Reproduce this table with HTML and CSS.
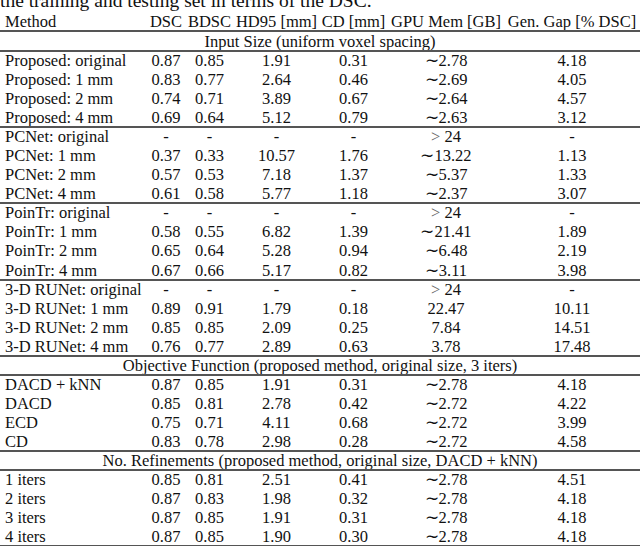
FILE: index.html
```html
<!DOCTYPE html>
<html lang="en">
<head>
<meta charset="utf-8">
<title>Table</title>
<link rel="stylesheet" href="styles.css">
</head>
<body>
<div class="caption">the training and testing set in terms of the DSC.</div>
<div class="table">
  <div class="row head">
    <div class="cell name">Method</div><div class="cell">DSC</div><div class="cell">BDSC</div><div class="cell">HD95 [mm]</div><div class="cell">CD [mm]</div><div class="cell">GPU Mem [GB]</div><div class="cell">Gen. Gap [% DSC]</div>
  </div>
  <div class="row head rule"><div class="cell span">Input Size (uniform voxel spacing)</div></div>

  <div class="row rule"><div class="cell name">Proposed: original</div><div class="cell">0.87</div><div class="cell">0.85</div><div class="cell">1.91</div><div class="cell">0.31</div><div class="cell">∼2.78</div><div class="cell">4.18</div></div>
  <div class="row"><div class="cell name">Proposed: 1 mm</div><div class="cell">0.83</div><div class="cell">0.77</div><div class="cell">2.64</div><div class="cell">0.46</div><div class="cell">∼2.69</div><div class="cell">4.05</div></div>
  <div class="row"><div class="cell name">Proposed: 2 mm</div><div class="cell">0.74</div><div class="cell">0.71</div><div class="cell">3.89</div><div class="cell">0.67</div><div class="cell">∼2.64</div><div class="cell">4.57</div></div>
  <div class="row"><div class="cell name">Proposed: 4 mm</div><div class="cell">0.69</div><div class="cell">0.64</div><div class="cell">5.12</div><div class="cell">0.79</div><div class="cell">∼2.63</div><div class="cell">3.12</div></div>

  <div class="row rule"><div class="cell name">PCNet: original</div><div class="cell">-</div><div class="cell">-</div><div class="cell">-</div><div class="cell">-</div><div class="cell"><span class="gt">&gt;</span>&nbsp;24</div><div class="cell">-</div></div>
  <div class="row"><div class="cell name">PCNet: 1 mm</div><div class="cell">0.37</div><div class="cell">0.33</div><div class="cell">10.57</div><div class="cell">1.76</div><div class="cell">∼13.22</div><div class="cell">1.13</div></div>
  <div class="row"><div class="cell name">PCNet: 2 mm</div><div class="cell">0.57</div><div class="cell">0.53</div><div class="cell">7.18</div><div class="cell">1.37</div><div class="cell">∼5.37</div><div class="cell">1.33</div></div>
  <div class="row"><div class="cell name">PCNet: 4 mm</div><div class="cell">0.61</div><div class="cell">0.58</div><div class="cell">5.77</div><div class="cell">1.18</div><div class="cell">∼2.37</div><div class="cell">3.07</div></div>

  <div class="row rule"><div class="cell name">PoinTr: original</div><div class="cell">-</div><div class="cell">-</div><div class="cell">-</div><div class="cell">-</div><div class="cell"><span class="gt">&gt;</span>&nbsp;24</div><div class="cell">-</div></div>
  <div class="row"><div class="cell name">PoinTr: 1 mm</div><div class="cell">0.58</div><div class="cell">0.55</div><div class="cell">6.82</div><div class="cell">1.39</div><div class="cell">∼21.41</div><div class="cell">1.89</div></div>
  <div class="row"><div class="cell name">PoinTr: 2 mm</div><div class="cell">0.65</div><div class="cell">0.64</div><div class="cell">5.28</div><div class="cell">0.94</div><div class="cell">∼6.48</div><div class="cell">2.19</div></div>
  <div class="row"><div class="cell name">PoinTr: 4 mm</div><div class="cell">0.67</div><div class="cell">0.66</div><div class="cell">5.17</div><div class="cell">0.82</div><div class="cell">∼3.11</div><div class="cell">3.98</div></div>

  <div class="row rule"><div class="cell name">3-D RUNet: original</div><div class="cell">-</div><div class="cell">-</div><div class="cell">-</div><div class="cell">-</div><div class="cell"><span class="gt">&gt;</span>&nbsp;24</div><div class="cell">-</div></div>
  <div class="row"><div class="cell name">3-D RUNet: 1 mm</div><div class="cell">0.89</div><div class="cell">0.91</div><div class="cell">1.79</div><div class="cell">0.18</div><div class="cell">22.47</div><div class="cell">10.11</div></div>
  <div class="row"><div class="cell name">3-D RUNet: 2 mm</div><div class="cell">0.85</div><div class="cell">0.85</div><div class="cell">2.09</div><div class="cell">0.25</div><div class="cell">7.84</div><div class="cell">14.51</div></div>
  <div class="row"><div class="cell name">3-D RUNet: 4 mm</div><div class="cell">0.76</div><div class="cell">0.77</div><div class="cell">2.89</div><div class="cell">0.63</div><div class="cell">3.78</div><div class="cell">17.48</div></div>

  <div class="row rule"><div class="cell span">Objective Function (proposed method, original size, 3 iters)</div></div>
  <div class="row rule"><div class="cell name">DACD + kNN</div><div class="cell">0.87</div><div class="cell">0.85</div><div class="cell">1.91</div><div class="cell">0.31</div><div class="cell">∼2.78</div><div class="cell">4.18</div></div>
  <div class="row"><div class="cell name">DACD</div><div class="cell">0.85</div><div class="cell">0.81</div><div class="cell">2.78</div><div class="cell">0.42</div><div class="cell">∼2.72</div><div class="cell">4.22</div></div>
  <div class="row"><div class="cell name">ECD</div><div class="cell">0.75</div><div class="cell">0.71</div><div class="cell">4.11</div><div class="cell">0.68</div><div class="cell">∼2.72</div><div class="cell">3.99</div></div>
  <div class="row"><div class="cell name">CD</div><div class="cell">0.83</div><div class="cell">0.78</div><div class="cell">2.98</div><div class="cell">0.28</div><div class="cell">∼2.72</div><div class="cell">4.58</div></div>

  <div class="row rule"><div class="cell span">No. Refinements (proposed method, original size, DACD + kNN)</div></div>
  <div class="row rule"><div class="cell name">1 iters</div><div class="cell">0.85</div><div class="cell">0.81</div><div class="cell">2.51</div><div class="cell">0.41</div><div class="cell">∼2.78</div><div class="cell">4.51</div></div>
  <div class="row"><div class="cell name">2 iters</div><div class="cell">0.87</div><div class="cell">0.83</div><div class="cell">1.98</div><div class="cell">0.32</div><div class="cell">∼2.78</div><div class="cell">4.18</div></div>
  <div class="row"><div class="cell name">3 iters</div><div class="cell">0.87</div><div class="cell">0.85</div><div class="cell">1.91</div><div class="cell">0.31</div><div class="cell">∼2.78</div><div class="cell">4.18</div></div>
  <div class="row last"><div class="cell name">4 iters</div><div class="cell">0.87</div><div class="cell">0.85</div><div class="cell">1.90</div><div class="cell">0.30</div><div class="cell">∼2.78</div><div class="cell">4.18</div></div>
</div>
</body>
</html>
```
FILE: styles.css
```css
html, body {
  margin: 0;
  padding: 0;
  background: #ffffff;
}

body {
  width: 640px;
  height: 546px;
  overflow: hidden;
  font-family: "Liberation Serif", "Times New Roman", serif;
  font-size: 16.5px;
  color: #111111;
}

.caption {
  margin-top: -9px;
  height: 19px;
  line-height: 19px;
  font-size: 19.5px;
  white-space: nowrap;
}

.table {
  display: flex;
  flex-direction: column;
  margin-top: 1px;
}

.row {
  display: grid;
  grid-template-columns: 147px 38px 49px 85px 69px 116px 136px;
  height: 19.05px;
  line-height: 19px;
  align-items: center;
}

.row.head {
  height: 20px;
}

.cell {
  display: flex;
  justify-content: center;
  white-space: nowrap;
}

.cell.name {
  justify-content: flex-start;
  padding-left: 5px;
}

.cell.span {
  grid-column: 1 / -1;
}

.rule {
  box-shadow: 0 -1px 0 #555555, inset 0 1px 0 #555555;
}

.last {
  box-shadow: 0 1px 0 #555555, inset 0 -1px 0 #555555;
}

.gt {
  color: #666666;
}
```
